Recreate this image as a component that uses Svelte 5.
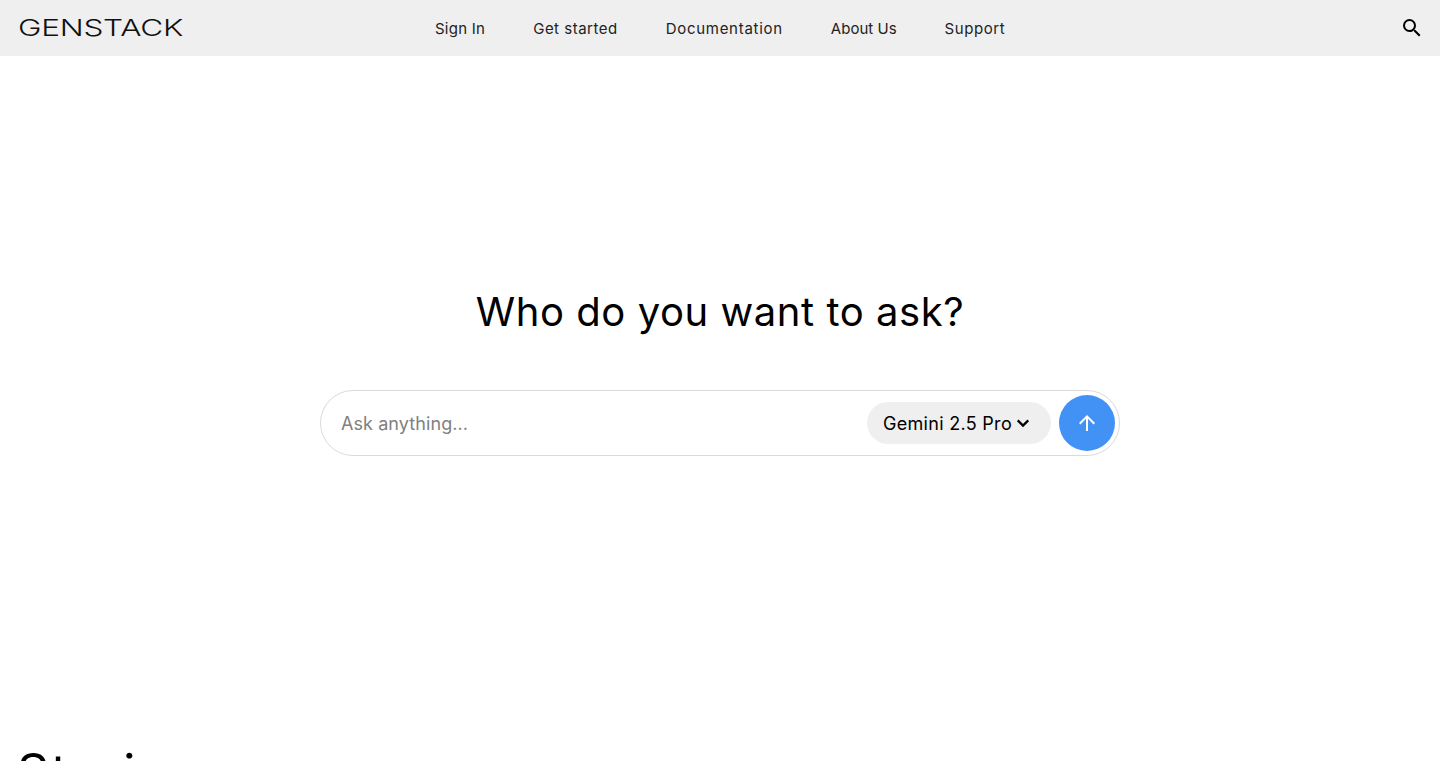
<script>
  const links = [
    { label: 'Sign In', spacing: 0.25 },
    { label: 'Get started', spacing: 0.5 },
    { label: 'Documentation', spacing: 0.72 },
    { label: 'About Us', spacing: 0.02 },
    { label: 'Support', spacing: 0.55 }
  ];
</script>

<header class="bar">
  <a class="logo" href="#top"><span>GENSTACK</span></a>
  <nav class="nav">
    {#each links as l}
      <a href="#top" style:letter-spacing="{l.spacing}px">{l.label}</a>
    {/each}
  </nav>
  <button class="search" aria-label="Search">
    <svg width="24" height="24" viewBox="0 0 24 24"><path fill="#000" d="M15.5 14h-.79l-.28-.27A6.471 6.471 0 0 0 16 9.5 6.5 6.5 0 1 0 9.5 16c1.61 0 3.09-.59 4.23-1.57l.27.28v.79l5 4.99L20.49 19l-4.99-5zm-6 0C7.01 14 5 11.99 5 9.5S7.01 5 9.5 5 14 7.01 14 9.5 11.99 14 9.5 14z"/></svg>
  </button>
</header>

<main>
  <section class="hero">
    <h1>Who do you want to ask?</h1>
    <form class="ask" onsubmit={(e) => e.preventDefault()}>
      <input placeholder="Ask anything..." />
      <button type="button" class="model">
        <span>Gemini 2.5 Pro</span>
        <svg width="18" height="18" viewBox="0 0 24 24"><path fill="none" stroke="#000" stroke-width="3" d="M5 8.5l7 7 7-7"/></svg>
      </button>
      <button type="submit" class="send" aria-label="Send">
        <svg width="24" height="24" viewBox="0 0 24 24"><path fill="#fff" d="M4 12l1.41 1.41L11 7.83V20h2V7.83l5.58 5.59L20 12l-8-8-8 8z"/></svg>
      </button>
    </form>
  </section>
  <h2>Stories</h2>
</main>

<style>
  :global(body) {
    margin: 0;
    background: #fff;
    font-family: "Inter", "Liberation Sans", sans-serif;
    overflow: hidden;
  }
  .bar {
    height: 56px;
    background: #efefef;
    display: flex;
    align-items: center;
    justify-content: space-between;
    padding: 0 16px 0 18px;
    position: relative;
  }
  .logo {
    color: #111;
    text-decoration: none;
    width: 165px;
    display: block;
    line-height: 1;
  }
  .logo span {
    display: inline-block;
    font-family: "Inter", sans-serif;
    font-size: 23px;
    font-weight: 300;
    transform-origin: left center;
    transform: scaleX(1.372);
    letter-spacing: -0.2px;
  }
  .nav {
    display: flex;
    gap: 48px;
    position: absolute;
    left: 435px;
    top: 0;
    height: 56px;
    align-items: center;
  }
  .nav a {
    color: #222;
    text-decoration: none;
    font-size: 15px;
  }
  .search {
    background: none;
    border: 0;
    padding: 0;
    display: flex;
  }
  .hero {
    height: 686px;
    display: flex;
    flex-direction: column;
    align-items: center;
    padding-top: 232px;
    box-sizing: border-box;
  }
  h1 {
    margin: 0;
    font-size: 40px;
    line-height: 48px;
    font-weight: 400;
    color: #000;
    letter-spacing: 0.55px;
  }
  .ask {
    margin-top: 54px;
    width: 800px;
    height: 66px;
    box-sizing: border-box;
    border: 1px solid #dadada;
    border-radius: 33px;
    display: flex;
    align-items: center;
    padding: 0 4px 0 18px;
  }
  input {
    flex: 1;
    min-width: 0;
    border: 0;
    outline: 0;
    font: inherit;
    font-size: 18px;
    letter-spacing: 0.08px;
    color: #000;
    background: none;
  }
  input::placeholder {
    color: #808080;
  }
  .model {
    height: 42px;
    width: 184px;
    border: 0;
    border-radius: 21px;
    background: #efefef;
    display: flex;
    align-items: center;
    justify-content: center;
    gap: 2px;
    font: inherit;
    font-size: 18px;
    letter-spacing: 0.3px;
    color: #000;
    padding: 0 3px 0 0;
    margin-right: 8px;
  }
  .send {
    width: 56px;
    height: 56px;
    border: 0;
    border-radius: 50%;
    background: #4292f6;
    display: flex;
    align-items: center;
    justify-content: center;
    padding: 0;
  }
  h2 {
    margin: 0;
    padding: 0 17px;
    font-size: 50px;
    line-height: 60px;
    font-weight: 400;
    color: #000;
    letter-spacing: 2.2px;
  }
</style>
